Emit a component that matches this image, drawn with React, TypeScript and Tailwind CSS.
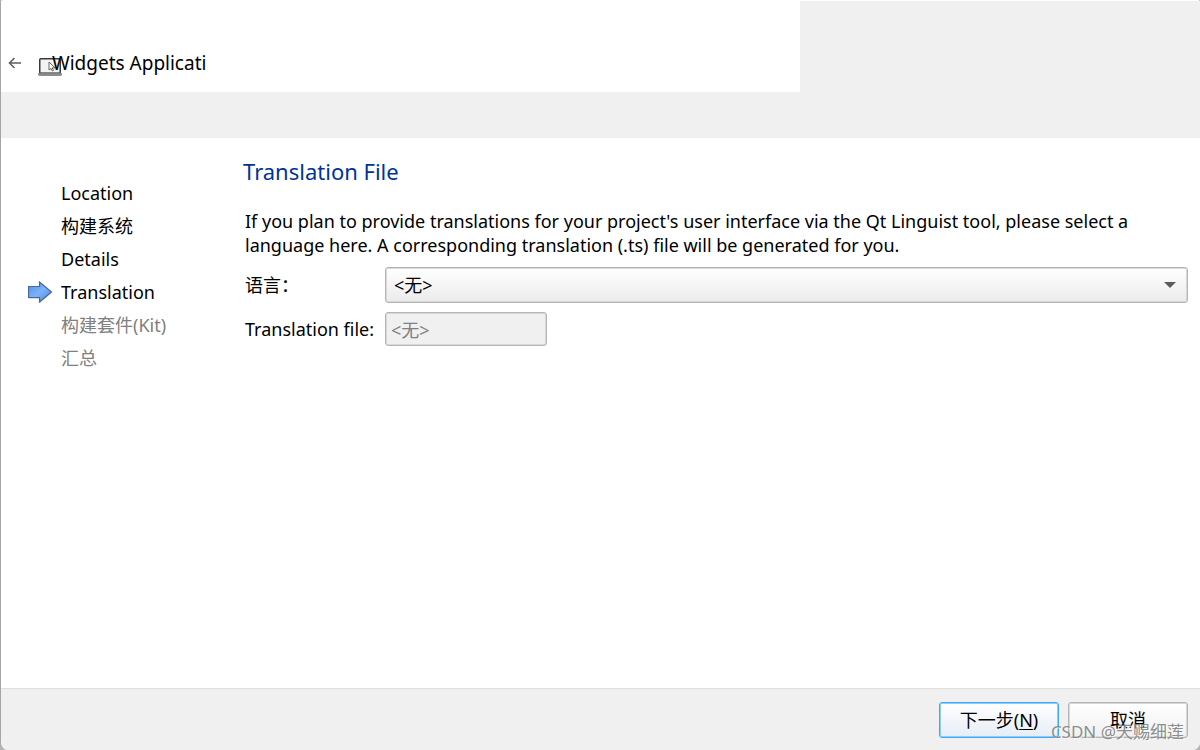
import { useState } from 'react';

type StepState = 'done' | 'current' | 'pending';

const STEPS: { label: string; state: StepState }[] = [
  { label: 'Location', state: 'done' },
  { label: '构建系统', state: 'done' },
  { label: 'Details', state: 'done' },
  { label: 'Translation', state: 'current' },
  { label: '构建套件(Kit)', state: 'pending' },
  { label: '汇总', state: 'pending' },
];

function BackIcon() {
  return (
    <svg width="14" height="12" viewBox="0 0 14 12" fill="none" stroke="#5f5f5f" strokeWidth="1.6">
      <path d="M13 6H1.5M6.5 1L1.5 6l5 5" />
    </svg>
  );
}

function LaptopIcon() {
  return (
    <svg width="24" height="18" viewBox="0 0 24 18" className="shrink-0">
      <rect x="1.75" y="0.75" width="20.5" height="14.5" rx="1" fill="#f4f4f4" stroke="#3a3a3a" strokeWidth="1.5" />
      <rect x="0.5" y="15" width="23" height="2.5" rx="1" fill="#8c8c8c" stroke="#666" strokeWidth="0.6" />
      <path d="M11 4v8l2-1.6 1.3 2.6 1.2-.6-1.3-2.5H17z" fill="#fff" stroke="#555" strokeWidth="0.9" />
    </svg>
  );
}

function CurrentStepArrow() {
  return (
    <svg width="25" height="24" viewBox="0 0 25 24">
      <defs>
        <linearGradient id="step-arrow" x1="0" y1="0" x2="1" y2="1">
          <stop offset="0" stopColor="#4d8fe6" />
          <stop offset="0.5" stopColor="#7db2f8" />
          <stop offset="1" stopColor="#4586dc" />
        </linearGradient>
      </defs>
      <path d="M1 8.5h11v5l12-1-12 11v-4.500H1z" fill="#000" opacity="0.15" />
      <path
        d="M0.5 6.5H11.5V2L23.5 12l-12 10V17.5H0.5z"
        fill="url(#step-arrow)"
        stroke="#45699c"
        strokeWidth="1.2"
      />
    </svg>
  );
}

function StepList() {
  return (
    <ol className="w-[242px] shrink-0 pt-[38px] pl-[27px]">
      {STEPS.map((step) => (
        <li
          key={step.label}
          aria-current={step.state === 'current' ? 'step' : undefined}
          className={`flex h-[33px] items-center ${step.state === 'pending' ? 'text-[#808080]' : 'text-black'}`}
        >
          <span className="w-[33px] shrink-0">{step.state === 'current' && <CurrentStepArrow />}</span>
          {step.label}
        </li>
      ))}
    </ol>
  );
}

export default function App() {
  const [language, setLanguage] = useState('none');

  return (
    <div className="bg-[#b5b5b5]">
      <div className="flex min-h-screen flex-col overflow-hidden rounded-t-[3px] rounded-b-lg border-l border-[#a6a6a6] bg-white font-['Noto_Sans','Noto_Sans_CJK_SC',sans-serif] text-[18px] leading-6 text-black">
        <header className="border-t border-white bg-[#f0f0f0] pb-[46px]">
          <div className="flex w-2/3 items-end bg-white pt-[49px] pb-4 pl-[7px]">
            <button type="button" aria-label="Back" className="flex h-[26px] w-[30px] items-center">
              <BackIcon />
            </button>
            <LaptopIcon />
            <h1 className="-ml-[10px] whitespace-nowrap text-[19px] leading-[26px]">Widgets Applicati</h1>
          </div>
        </header>

        <div className="flex flex-1">
          <StepList />

          <main className="min-w-0 flex-1 pt-[19px] pr-3">
            <h2 className="text-[22px] leading-7 text-[#003399]">Translation File</h2>

            <div className="pt-6 pl-[2px]">
              <p>
                If you plan to provide translations for your project's user interface via the Qt Linguist tool, please
                select a language here. A corresponding translation (.ts) file will be generated for you.
              </p>

              <div className="mt-[10px] grid grid-cols-[140px_1fr] items-center gap-y-[9px]">
                <label htmlFor="language">语言：</label>
                <div className="relative">
                  <select
                    id="language"
                    value={language}
                    onChange={(e) => setLanguage(e.target.value)}
                    className="h-9 w-full appearance-none rounded-[3px] border border-[#b5b5b5] bg-linear-to-b from-white to-[#ebebeb] pl-2 inset-shadow-[0_0_0_1px_#d8d8d8]"
                  >
                    <option value="none">&lt;无&gt;</option>
                  </select>
                  <svg
                    width="12"
                    height="6"
                    viewBox="0 0 12 6"
                    className="pointer-events-none absolute top-[15px] right-3"
                  >
                    <path d="M0 0h12L6 6z" fill="#5c5c5c" />
                  </svg>
                </div>

                <label htmlFor="translation-file">Translation file:</label>
                <input
                  id="translation-file"
                  type="text"
                  value="<无>"
                  disabled
                  readOnly
                  className="h-[34px] w-[162px] rounded-[3px] border border-[#b5b5b5] bg-[#f0f0f0] pl-[5px] text-[#808080] inset-shadow-[0_0_0_1px_#d8d8d8]"
                />
              </div>
            </div>
          </main>
        </div>

        <footer className="relative flex justify-end gap-[9px] border-t border-[#dfdfdf] bg-[#f0f0f0] px-3 pt-[13px] pb-3">
          <button
            type="button"
            className="h-9 w-[120px] rounded-[3px] border border-[#3fa9f5] bg-linear-to-b from-white to-[#e6edf5] inset-shadow-[0_0_0_1px_#8fcbfa]"
          >
            下一步(<u className="underline-offset-2">N</u>)
          </button>
          <button
            type="button"
            className="h-9 w-[120px] rounded-[3px] border border-[#b5b5b5] bg-linear-to-b from-white to-[#f0f0f0] inset-shadow-[0_0_0_1px_#d8d8d8]"
          >
            取消
          </button>
          <span className="pointer-events-none absolute right-4 bottom-[6px] text-[17px] text-[#808080]/90 [text-shadow:1px_1px_0_rgb(255_255_255/0.6)]">
            CSDN @天赐细莲
          </span>
        </footer>
      </div>
    </div>
  );
}
